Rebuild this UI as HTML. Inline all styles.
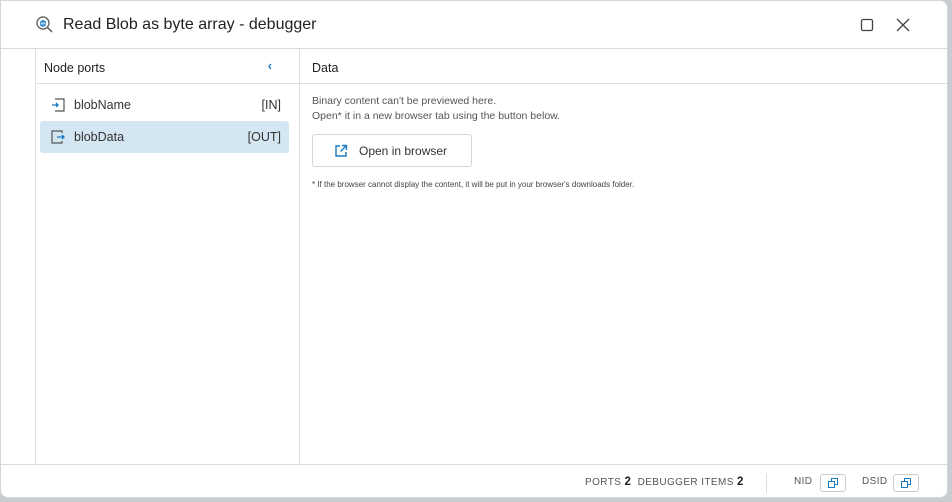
<!DOCTYPE html>
<html><head><style>
*{margin:0;padding:0;box-sizing:border-box}
body{width:952px;height:502px;background:#c9ccd1;font-family:"Liberation Sans",sans-serif;overflow:hidden;position:relative}
.win{position:absolute;left:0;top:0;width:948px;height:498px;background:#fff;border-radius:0 8px 8px 8px;border:1px solid #d4d6da}
.title{position:absolute;left:62px;top:15px;font-size:16px;color:#222}
.hline{position:absolute;left:0;right:0;top:47px;border-top:1px solid #dadada}
.lp{position:absolute;left:34px;top:48px;width:265px;height:415px;border-left:1px solid #e0e0e0;border-right:1px solid #e0e0e0}
.rp{position:absolute;left:299px;top:48px;right:0;height:415px}
.hdr{height:35px;border-bottom:1px solid #e0e0e0;font-size:12.5px;color:#222;padding:12px 0 0 8px}
.row{position:absolute;left:4px;width:249px;height:32px;font-size:12.5px;color:#333;border-radius:3px}
.row span.n{position:absolute;left:34px;top:9px}
.row span.t{position:absolute;right:8px;top:9px}
.foot{position:absolute;left:0;right:0;top:463px;border-top:1px solid #dadada;height:34px;font-size:10px;color:#555;letter-spacing:.4px}
.foot b{color:#222;font-size:11.5px}
.cb{position:absolute;top:9px;width:26px;height:18px;border:1px solid #ccc;border-radius:3px}
</style></head><body>
<div class="win">
<svg style="position:absolute;left:34px;top:14px" width="20" height="20" viewBox="0 0 20 20"><circle cx="8" cy="8" r="6" fill="none" stroke="#666" stroke-width="1.4"/><line x1="12.5" y1="12.5" x2="17" y2="17" stroke="#666" stroke-width="1.6"/><ellipse cx="8" cy="8.5" rx="2.3" ry="2.8" fill="none" stroke="#1a7ac2" stroke-width="1.1"/><path d="M5 7h6M5 10h6M8 5.5v6" stroke="#1a7ac2" stroke-width=".8"/></svg>
<div class="title">Read Blob as byte array - debugger</div>
<svg style="position:absolute;left:859px;top:17px" width="14" height="14"><rect x="1.5" y="1.5" width="11" height="11" rx="1.5" fill="none" stroke="#444" stroke-width="1.3"/></svg>
<svg style="position:absolute;left:895px;top:17px" width="14" height="14"><path d="M1 1L13 13M13 1L1 13" stroke="#444" stroke-width="1.3"/></svg>
<div class="hline"></div>
<div class="lp">
<div class="hdr">Node ports<span style="position:absolute;right:27px;top:10px;color:#1a7ac2;font-weight:bold">‹</span></div>
<div class="row" style="top:40px"><svg style="position:absolute;left:10px;top:8px" width="16" height="16"><path d="M5 2h9v12H5" fill="none" stroke="#555" stroke-width="1.2"/><path d="M2 8h6M6 6l2 2-2 2" fill="none" stroke="#1a7ac2" stroke-width="1.3"/></svg><span class="n">blobName</span><span class="t">[IN]</span></div>
<div class="row" style="top:72px;background:#d5e6f3"><svg style="position:absolute;left:10px;top:8px" width="16" height="16"><path d="M12 4V2H2v12h10v-2" fill="none" stroke="#555" stroke-width="1.2"/><path d="M7 8h7M12 6l2 2-2 2" fill="none" stroke="#1a7ac2" stroke-width="1.3"/></svg><span class="n">blobData</span><span class="t">[OUT]</span></div>
</div>
<div class="rp">
<div class="hdr" style="padding-left:12px">Data</div>
<div style="position:absolute;left:12px;top:45px;font-size:10.5px;color:#555;line-height:15px">Binary content can't be previewed here.<br>Open* it in a new browser tab using the button below.</div>
<div style="position:absolute;left:12px;top:85px;width:160px;height:33px;border:1px solid #d6d6d6;border-radius:3px;font-size:12px;color:#333"><svg style="position:absolute;left:21px;top:9px" width="14" height="14"><path d="M6 2H2v10h10V8" fill="none" stroke="#1a7ac2" stroke-width="1.4"/><path d="M8 1.5h4.5V6M12.5 1.5L6.5 7.5" fill="none" stroke="#1a7ac2" stroke-width="1.4"/></svg><span style="position:absolute;left:46px;top:9px">Open in browser</span></div>
<div style="position:absolute;left:12px;top:131px;font-size:8px;color:#444">* If the browser cannot display the content, it will be put in your browser's downloads folder.</div>
</div>
<div class="foot">
<span style="position:absolute;left:584px;top:11px">PORTS <b>2</b>&nbsp; DEBUGGER ITEMS <b>2</b></span>
<div style="position:absolute;left:765px;top:8px;height:20px;border-left:1px solid #ddd"></div>
<span style="position:absolute;left:793px;top:11px">NID</span>
<div class="cb" style="left:819px"><svg style="position:absolute;left:7px;top:3px" width="10" height="10"><rect x="3.5" y=".5" width="6" height="6" fill="none" stroke="#1a7ac2"/><rect x=".5" y="3.5" width="6" height="6" fill="#fff" stroke="#1a7ac2"/></svg></div>
<span style="position:absolute;left:861px;top:11px">DSID</span>
<div class="cb" style="left:892px"><svg style="position:absolute;left:7px;top:3px" width="10" height="10"><rect x="3.5" y=".5" width="6" height="6" fill="none" stroke="#1a7ac2"/><rect x=".5" y="3.5" width="6" height="6" fill="#fff" stroke="#1a7ac2"/></svg></div>
</div>
</div>
</body></html>
